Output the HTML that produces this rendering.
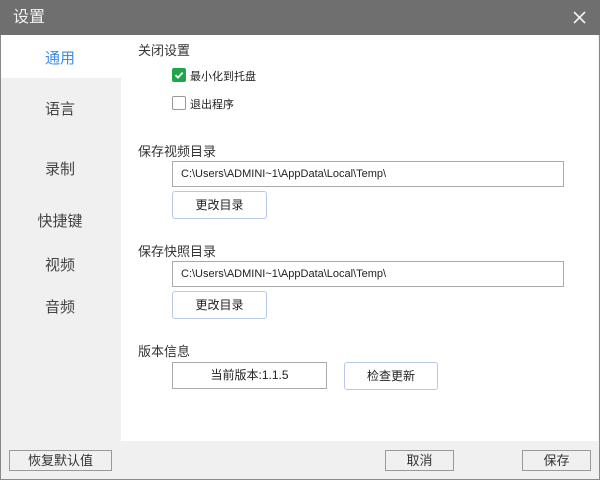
<!DOCTYPE html>
<html><head><meta charset="utf-8"><style>
*{margin:0;padding:0;box-sizing:border-box}
body{width:600px;height:480px;position:relative;background:#f0f0f0;font-family:"Liberation Sans","Noto Sans CJK SC","Microsoft YaHei",sans-serif;color:#333;overflow:hidden}
.a{position:absolute}
.title{left:0;top:0;width:600px;height:35px;background:#6f6f6f;color:#f2f2f2;font-size:16px;line-height:35px;padding-left:13px}
.frame{left:0;top:35px;width:600px;height:445px;border:1px solid #8a8a8a;border-top:none}
.content{left:121px;top:35px;width:477px;height:406px;background:#fff}
.nav{font-size:15px;color:#444;width:120px;text-align:center}
.sel{left:1px;top:35px;width:120px;height:43px;background:#fff}
.h{font-size:13px;color:#333}
.s{font-size:11px;color:#222}
.box{border:1px solid #aaa;background:#fff;font-size:11px;line-height:24px;padding-left:8px;color:#222}
.btn{border:1px solid #b8c8e8;border-radius:3px;background:#fff;font-size:12px;text-align:center;color:#222}
.gb{border:1px solid #999;background:#f0f0f0;font-size:13px;text-align:center;line-height:20px;color:#333}
</style></head><body>
<div class="a title">设置</div>
<svg class="a" style="left:573px;top:11px" width="13" height="13"><path d="M1 1L12 12M12 1L1 12" stroke="#f2f2f2" stroke-width="1.6"/></svg>
<div class="a frame"></div>
<div class="a content"></div>
<div class="a sel"></div>
<div class="a nav" style="left:0;top:47px;color:#3a8ee6">通用</div>
<div class="a nav" style="left:0;top:98px">语言</div>
<div class="a nav" style="left:0;top:158px">录制</div>
<div class="a nav" style="left:0;top:210px">快捷键</div>
<div class="a nav" style="left:0;top:254px">视频</div>
<div class="a nav" style="left:0;top:296px">音频</div>

<div class="a h" style="left:138px;top:40px">关闭设置</div>
<div class="a" style="left:172px;top:68px;width:14px;height:14px;background:#1fa64a;border-radius:2px"></div>
<svg class="a" style="left:172px;top:68px" width="14" height="14"><path d="M3.5 7.2L6 9.6L10.6 4.6" stroke="#fff" stroke-width="1.8" fill="none"/></svg>
<div class="a s" style="left:190px;top:68px">最小化到托盘</div>
<div class="a" style="left:172px;top:96px;width:14px;height:14px;border:1px solid #999;border-radius:2px;background:#fff"></div>
<div class="a s" style="left:190px;top:96px">退出程序</div>

<div class="a h" style="left:138px;top:141px">保存视频目录</div>
<div class="a box" style="left:172px;top:161px;width:392px;height:26px">C:\Users\ADMINI~1\AppData\Local\Temp\</div>
<div class="a btn" style="left:172px;top:191px;width:95px;height:28px;line-height:26px">更改目录</div>

<div class="a h" style="left:138px;top:241px">保存快照目录</div>
<div class="a box" style="left:172px;top:261px;width:392px;height:26px">C:\Users\ADMINI~1\AppData\Local\Temp\</div>
<div class="a btn" style="left:172px;top:291px;width:95px;height:28px;line-height:26px">更改目录</div>

<div class="a h" style="left:138px;top:341px">版本信息</div>
<div class="a box" style="left:172px;top:362px;width:155px;height:27px;padding:0;text-align:center;line-height:25px;font-size:12px">当前版本:1.1.5</div>
<div class="a btn" style="left:344px;top:362px;width:94px;height:28px;line-height:26px">检查更新</div>

<div class="a gb" style="left:9px;top:450px;width:103px;height:21px">恢复默认值</div>
<div class="a gb" style="left:385px;top:450px;width:69px;height:21px">取消</div>
<div class="a gb" style="left:522px;top:450px;width:69px;height:21px">保存</div>
</body></html>
